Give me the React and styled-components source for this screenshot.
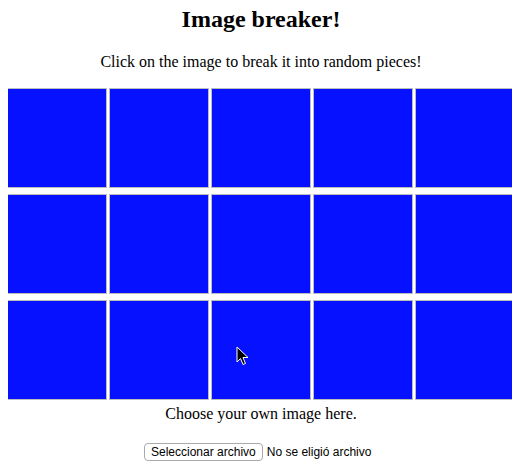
import React from "react";
import styled, { createGlobalStyle } from "styled-components";

const GlobalStyle = createGlobalStyle`
  html {
    overflow: hidden;
  }
  body {
    margin: 8px;
    background: #ffffff;
    font-family: "Liberation Serif", "Times New Roman", serif;
    color: #000;
  }
`;

const Page = styled.div`
  display: flex;
  flex-direction: column;
  align-items: center;
  margin: 0 -8px;
  padding-left: 2px;
`;

const Title = styled.h1`
  font-size: 24px;
  font-weight: bold;
  margin: 0;
  line-height: 22px;
`;

const Caption = styled.p`
  font-size: 16px;
  margin: 22px 0 17px;
  line-height: 19px;
`;

const Board = styled.div`
  position: relative;
  display: grid;
  grid-template-columns: repeat(5, 100px);
  grid-auto-rows: 100px;
  column-gap: 2px;
  row-gap: 6px;
`;

const Piece = styled.div`
  box-sizing: border-box;
  border: 1px solid #bcbcbc;
  background: ${({ $fill }) => $fill};
`;

const Cursor = styled.svg`
  position: absolute;
  left: 229px;
  top: 258px;
  width: 14px;
  height: 20px;
`;

const Hint = styled.p`
  font-size: 16px;
  margin: 4px 0 0;
  line-height: 19px;
`;

const FileRow = styled.div`
  display: flex;
  align-items: center;
  gap: 4px;
  width: 234px;
  margin-top: 20px;
  font-family: "Liberation Sans", Arial, sans-serif;
  font-size: 12px;
`;

const FileButton = styled.button`
  font-family: inherit;
  font-size: 12px;
  line-height: 14px;
  background: #fff;
  border: 1px solid #a9a9a9;
  border-radius: 4px;
  padding: 1px 6px;
  height: 18px;
  color: #000;
`;

const pieces = Array.from({ length: 15 }, (_, i) => i);

const App = () => {
  return (
    <Page>
      <GlobalStyle />
      <Title>Image breaker!</Title>
      <Caption>Click on the image to break it into random pieces!</Caption>
      <Board>
        {pieces.map((p) => (
          <Piece key={p} $fill="#0511ff" />
        ))}
        <Cursor viewBox="0 0 14 20">
          <path
            d="M1 1 L1 16 L4.5 12.5 L7 18.5 L9.5 17.5 L7 11.5 L12 11.5 Z"
            fill="#000"
            stroke="#fff"
            strokeWidth="1"
            strokeLinejoin="round"
          />
        </Cursor>
      </Board>
      <Hint>Choose your own image here.</Hint>
      <FileRow>
        <FileButton>Seleccionar archivo</FileButton>
        <span>No se eligió archivo</span>
      </FileRow>
    </Page>
  );
};

export default App;
